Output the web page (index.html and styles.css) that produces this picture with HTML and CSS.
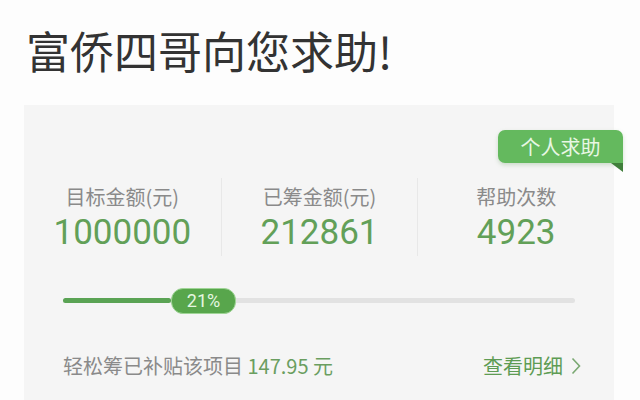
FILE: index.html
```html
<!DOCTYPE html>
<html lang="zh">
<head>
    <meta charset="UTF-8">
    <meta name="viewport" content="width=device-width, initial-scale=1.0">
    <title>富侨四哥向您求助</title>
    <link rel="stylesheet" href="styles.css">
</head>
<body>

    <h1 class="title">富侨四哥向您求助!</h1>

    <div class="card">
        <div class="badge">个人求助</div>

        <div class="stats">
            <div class="stat">
                <div class="stat-label">目标金额(元)</div>
                <div class="stat-value">1000000</div>
            </div>
            <div class="stat">
                <div class="stat-label">已筹金额(元)</div>
                <div class="stat-value">212861</div>
            </div>
            <div class="stat">
                <div class="stat-label">帮助次数</div>
                <div class="stat-value">4923</div>
            </div>
        </div>

        <div class="progress">
            <div class="progress-fill" style="width: 21%"></div>
            <div class="progress-pill">21%</div>
        </div>

        <div class="footer">
            <div class="subsidy">轻松筹已补贴该项目 <span class="money">147.95 元</span></div>
            <div class="detail">查看明细
                <svg class="chevron" width="10" height="18" viewBox="0 0 10 18">
                    <path d="M1.5 1.5 L8.5 9 L1.5 16.5" fill="none" stroke="#7aa872" stroke-width="1.6"/>
                </svg>
            </div>
        </div>
    </div>

</body>
</html>
```

FILE: styles.css
```css
body {
    margin: 0;
    background-color: #fdfdfd;
    font-family: "Noto Sans CJK SC", sans-serif;
    height: 400px;
    overflow: hidden;
}
.title {
    margin: 0;
    padding: 24px 0 0 26px;
    height: 105px;
    box-sizing: border-box;
    font-size: 44px;
    line-height: 52px;
    font-weight: normal;
    color: #333333;
}
.card {
    position: relative;
    margin-left: 24px;
    width: 590px;
    height: 295px;
    background-color: #f5f5f5;
    padding-top: 73px;
    box-sizing: border-box;
}
.badge {
    position: absolute;
    top: 25px;
    right: -9px;
    width: 125px;
    height: 33px;
    background-color: #64b95e;
    border-radius: 7px 7px 0 7px;
    color: #e8f7e4;
    font-size: 20px;
    line-height: 33px;
    text-align: center;
    box-shadow: 0 2px 4px rgba(80, 140, 70, 0.25);
}
.badge::after {
    content: "";
    position: absolute;
    right: 0;
    bottom: -9px;
    border-top: 9px solid #3f7e3a;
    border-left: 12px solid transparent;
}
.stats {
    display: grid;
    grid-template-columns: repeat(3, 1fr);
    height: 77px;
}
.stat {
    text-align: center;
    border-left: 1px solid #e8e8e8;
}
.stat:first-child {
    border-left: none;
}
.stat-label {
    margin-top: 6px;
    font-size: 20px;
    line-height: 26px;
    color: #8a8a8a;
}
.stat-value {
    font-family: Roboto, "Liberation Sans", sans-serif;
    font-size: 35px;
    line-height: 46px;
    color: #62a058;
}
.progress {
    position: relative;
    margin: 43px 39px 0 39px;
    height: 5px;
    background-color: #e2e2e2;
    border-radius: 3px;
}
.progress-fill {
    height: 5px;
    background-color: #5aa354;
    border-radius: 3px;
}
.progress-pill {
    position: absolute;
    left: 108px;
    top: -10px;
    width: 63px;
    height: 24px;
    background-color: #58a64c;
    border: 1px solid #9fd596;
    border-radius: 12px;
    color: #e6f6e1;
    font-family: Roboto, "Liberation Sans", sans-serif;
    font-size: 18px;
    line-height: 24px;
    text-align: center;
}
.footer {
    display: flex;
    justify-content: space-between;
    align-items: center;
    margin: 50px 33px 0 39px;
    font-size: 20px;
    line-height: 26px;
}
.subsidy {
    color: #8a8a8a;
}
.money {
    color: #6a9e60;
}
.detail {
    display: flex;
    align-items: center;
    gap: 8px;
    color: #5e9c54;
}
```
